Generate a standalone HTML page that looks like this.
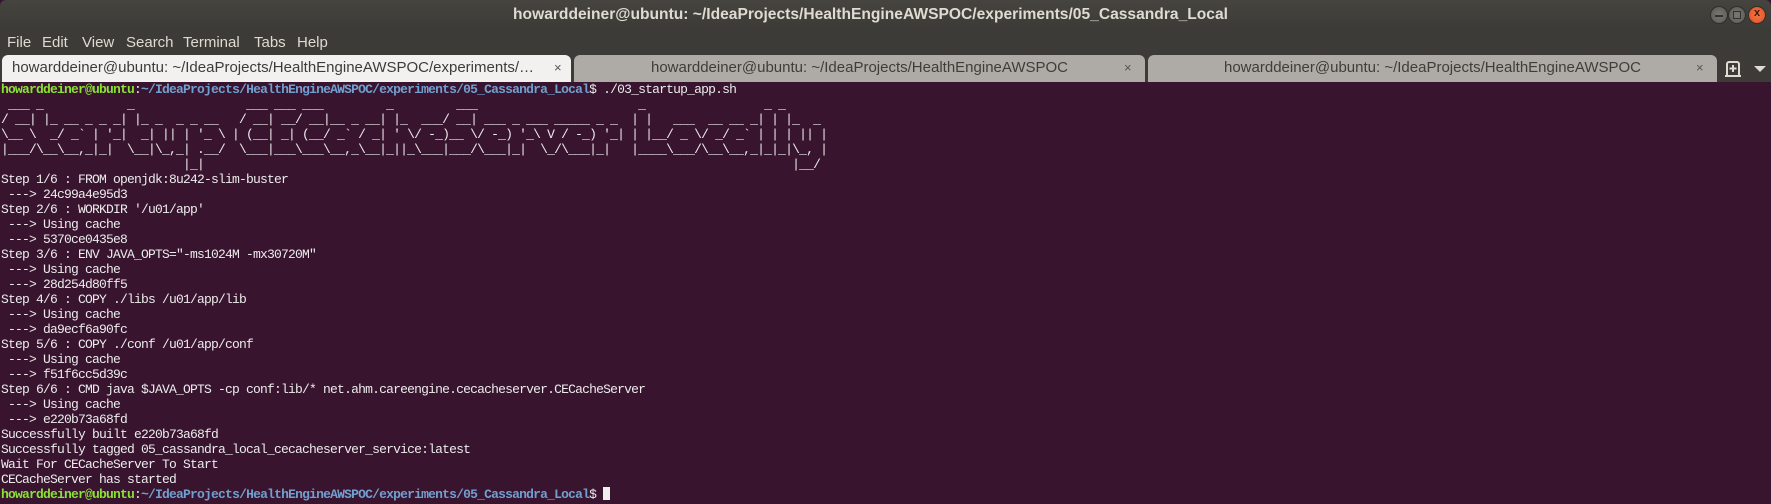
<!DOCTYPE html>
<html><head><meta charset="utf-8">
<style>
*{margin:0;padding:0;box-sizing:border-box}
html,body{width:1771px;height:504px;overflow:hidden;background:#38142f}
#title{position:absolute;left:0;top:0;width:1771px;height:32px;background:linear-gradient(#45443f,#3b3a36);border-radius:6px 6px 0 0}
#title .t{position:absolute;left:0;width:1771px;top:6px;text-align:center;font:bold 15.6px "Liberation Sans",sans-serif;color:#dfdbd2;padding-right:30px}
.btn{position:absolute;top:6px;width:18px;height:18px;border-radius:50%;background:radial-gradient(#7a7873,#5a5853);border:1px solid #2f2e2b}
.btn.c{background:radial-gradient(#f3764a,#e0501f)}
#menu{position:absolute;left:0;top:32px;width:1771px;height:22px;background:#3c3b37;font:15px "Liberation Sans",sans-serif;color:#dfdbd2}
#menu span{position:absolute;top:2px}
#tabs{position:absolute;left:0;top:54px;width:1771px;height:28px;background:#3c3b37}
.tab{position:absolute;top:1px;height:27px;border-radius:6px 6px 0 0;background:#aeaba6;color:#3e3d3a;font:15px "Liberation Sans",sans-serif;text-align:center;line-height:26px;white-space:nowrap;overflow:hidden}
.tab.a{background:#f2f1f0;color:#3c3c3c;text-align:left;padding-left:10px}
.tab .x{position:absolute;top:0;font-size:13px;color:#555}
#term{position:absolute;left:0;top:82px;width:1771px;height:422px;background:#38142f;color:#ececec;font:13px "Liberation Mono",monospace;letter-spacing:-0.8px;line-height:15px;white-space:pre;padding-left:1px}
.g{color:#8ae234;font-weight:bold}.b{color:#729fcf;font-weight:bold}
.cur{display:inline-block;width:7px;height:13px;background:#eee;vertical-align:-2px}
</style></head><body>
<div id="title"><div class="t">howarddeiner@ubuntu: ~/IdeaProjects/HealthEngineAWSPOC/experiments/05_Cassandra_Local</div>
<div class="btn" style="left:1710px"><div style="position:absolute;left:4px;top:8px;width:8px;height:1.5px;background:#333"></div></div>
<div class="btn" style="left:1728px"><div style="position:absolute;left:4px;top:4px;width:8px;height:8px;border:1.5px solid #333"></div></div>
<div class="btn c" style="left:1748px"><div style="position:absolute;left:0;top:0;width:16px;line-height:16px;text-align:center;font:bold 11px 'Liberation Sans',sans-serif;color:#3a1a0a">x</div></div>
</div>
<div id="menu"><span style="left:7px">File</span><span style="left:42px">Edit</span><span style="left:82px">View</span><span style="left:126px">Search</span><span style="left:183px">Terminal</span><span style="left:254px">Tabs</span><span style="left:297px">Help</span></div>
<div id="tabs">
<div class="tab a" style="left:2px;width:569px">howarddeiner@ubuntu: ~/IdeaProjects/HealthEngineAWSPOC/experiments/…<span class="x" style="left:552px">×</span></div>
<div class="tab" style="left:574px;width:571px">howarddeiner@ubuntu: ~/IdeaProjects/HealthEngineAWSPOC<span class="x" style="left:550px">×</span></div>
<div class="tab" style="left:1148px;width:569px">howarddeiner@ubuntu: ~/IdeaProjects/HealthEngineAWSPOC<span class="x" style="left:548px">×</span></div>
<svg style="position:absolute;left:1724px;top:6px" width="18" height="18" viewBox="0 0 18 18"><path d="M3 16V4a2 2 0 0 1 2-2h8a2 2 0 0 1 2 2v12M1 16h16M9 5v7M5.5 8.5h7" stroke="#dfdbd2" stroke-width="2" fill="none"/></svg>
<svg style="position:absolute;left:1754px;top:11px" width="12" height="8"><path d="M0 1h12L6 7z" fill="#dfdbd2"/></svg>
</div>
<div id="term"><span class="g">howarddeiner@ubuntu</span>:<span class="b">~/IdeaProjects/HealthEngineAWSPOC/experiments/05_Cassandra_Local</span>$ ./03_startup_app.sh
 ___ _            _                ___ ___ ___         _         ___                       _                 _ _      
/ __| |_ __ _ _ _| |_ _  _ _ __   / __| __/ __|__ _ __| |_  ___/ __| ___ _ ___ _____ _ _  | |   ___  __ __ _| | |_  _ 
\__ \  _/ _` | '_|  _| || | '_ \ | (__| _| (__/ _` / _| ' \/ -_)__ \/ -_) '_\ V / -_) '_| | |__/ _ \/ _/ _` | | | || |
|___/\__\__,_|_|  \__|\_,_| .__/  \___|___\___\__,_\__|_||_\___|___/\___|_|  \_/\___|_|   |____\___/\__\__,_|_|_|\_, |
                          |_|                                                                                    |__/ 
Step 1/6 : FROM openjdk:8u242-slim-buster
 ---&gt; 24c99a4e95d3
Step 2/6 : WORKDIR '/u01/app'
 ---&gt; Using cache
 ---&gt; 5370ce0435e8
Step 3/6 : ENV JAVA_OPTS="-ms1024M -mx30720M"
 ---&gt; Using cache
 ---&gt; 28d254d80ff5
Step 4/6 : COPY ./libs /u01/app/lib
 ---&gt; Using cache
 ---&gt; da9ecf6a90fc
Step 5/6 : COPY ./conf /u01/app/conf
 ---&gt; Using cache
 ---&gt; f51f6cc5d39c
Step 6/6 : CMD java $JAVA_OPTS -cp conf:lib/* net.ahm.careengine.cecacheserver.CECacheServer
 ---&gt; Using cache
 ---&gt; e220b73a68fd
Successfully built e220b73a68fd
Successfully tagged 05_cassandra_local_cecacheserver_service:latest
Wait For CECacheServer To Start
CECacheServer has started
<span class="g">howarddeiner@ubuntu</span>:<span class="b">~/IdeaProjects/HealthEngineAWSPOC/experiments/05_Cassandra_Local</span>$ <span class="cur"></span></div>
</body></html>
